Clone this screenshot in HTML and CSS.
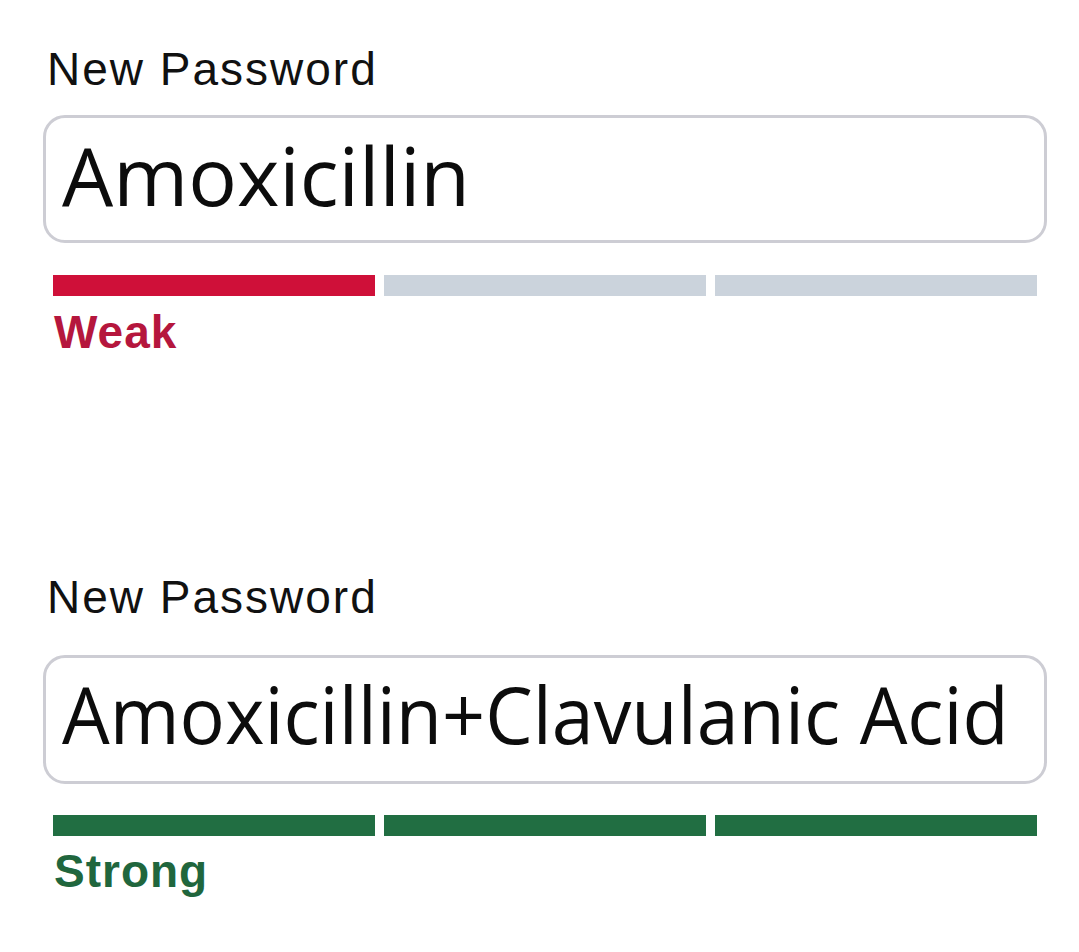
FILE: index.html
```html
<!DOCTYPE html>
<html>
<head>
<meta charset="utf-8">
<link rel="stylesheet" href="styles.css">
</head>
<body>
<main class="page">
  <section class="field">
    <div class="label">New Password</div>
    <div class="input first"><span class="value">Amoxicillin</span></div>
    <div class="meter">
      <span class="seg weak"></span>
      <span class="seg"></span>
      <span class="seg"></span>
    </div>
    <div class="status weak-text">Weak</div>
  </section>
  <section class="field second">
    <div class="label">New Password</div>
    <div class="input long"><span class="value">Amoxicillin+Clavulanic Acid</span></div>
    <div class="meter">
      <span class="seg strong"></span>
      <span class="seg strong"></span>
      <span class="seg strong"></span>
    </div>
    <div class="status strong-text">Strong</div>
  </section>
</main>
</body>
</html>
```
FILE: styles.css
```css
html, body {
  margin: 0;
  padding: 0;
  background: #ffffff;
}
.page {
  padding: 43px 0 0 43px;
  width: 1004px;
  display: flex;
  flex-direction: column;
}
.field {
  display: flex;
  flex-direction: column;
}
.field.second {
  margin-top: 212px;
}
.label {
  font-family: "Liberation Sans", Arial, sans-serif;
  font-size: 46px;
  line-height: 53px;
  letter-spacing: 2px;
  color: #111;
  padding-left: 4px;
}
.input {
  box-sizing: border-box;
  border: 3px solid #cdcdd4;
  border-radius: 22px;
  font-family: "Open Sans", "Noto Sans", sans-serif;
  color: #0c0c0c;
  padding-left: 16px;
  white-space: nowrap;
  overflow: hidden;
}
.input.first {
  margin-top: 19px;
  height: 128px;
  font-size: 81px;
  line-height: 114px;
}
.input.long {
  margin-top: 31px;
  height: 129px;
  font-size: 79px;
  line-height: 112px;
}
.value {
  display: inline-block;
  transform-origin: left center;
}
.input.long .value {
  transform: scaleX(0.955);
}
.meter {
  margin: 32px 10px 0 10px;
  display: flex;
  gap: 9px;
  height: 21px;
}
.field.second .meter {
  margin-top: 31px;
}
.seg {
  flex: 1;
  background: #cbd3dc;
}
.seg.weak { background: #cf1039; }
.seg.strong { background: #216e42; }
.status {
  font-family: "Liberation Sans", Arial, sans-serif;
  font-weight: bold;
  font-size: 46px;
  line-height: 53px;
  letter-spacing: 1px;
  margin-top: 10px;
  padding-left: 11px;
}
.field.second .status {
  margin-top: 9px;
}
.weak-text { color: #b5163d; }
.strong-text { color: #20663d; }
```
